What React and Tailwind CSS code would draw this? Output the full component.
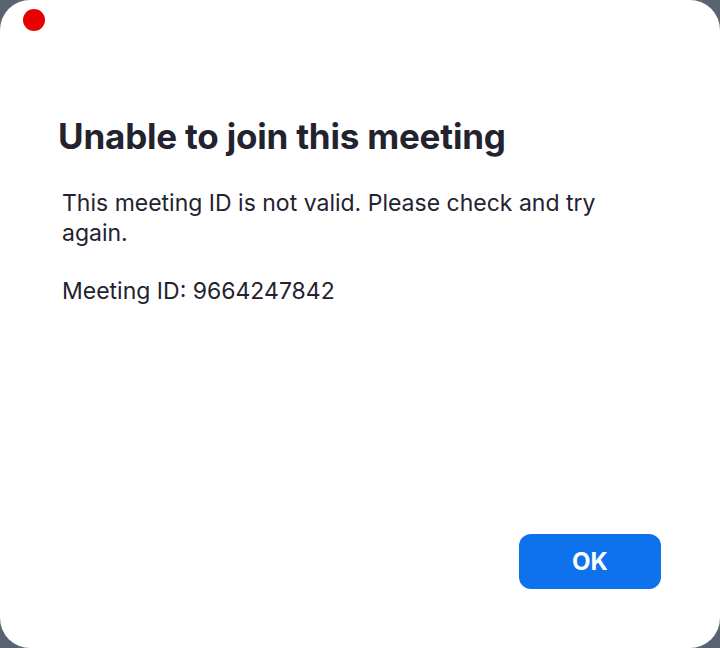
export default function App() {
  return (
    <div className="w-[720px] h-[648px] bg-[#5b6273]" style={{ fontFamily: 'Inter, "Noto Sans", sans-serif' }}>
      <div className="w-full h-full bg-white rounded-[30px] flex flex-col text-[#23232f]">
        <div className="pt-[9px] pl-[23px]">
          <div className="w-[22px] h-[22px] rounded-full bg-[#e80000]" />
        </div>
        <h1 className="mt-[85px] pl-[58px] text-[35px] leading-[40px] font-bold tracking-[-0.2px]">
          Unable to join this meeting
        </h1>
        <div className="mt-[32px] pl-[62px] pr-[80px] text-[23px] leading-[30px]">
          <p>This meeting ID is not valid. Please check and try again.</p>
          <p className="mt-[28px]">Meeting ID: 9664247842</p>
        </div>
        <div className="mt-auto flex justify-end pr-[59px] pb-[59px]">
          <button className="w-[142px] h-[55px] rounded-[12px] bg-[#0e72ed] text-white text-[24px] font-bold">
            OK
          </button>
        </div>
      </div>
    </div>
  );
}
